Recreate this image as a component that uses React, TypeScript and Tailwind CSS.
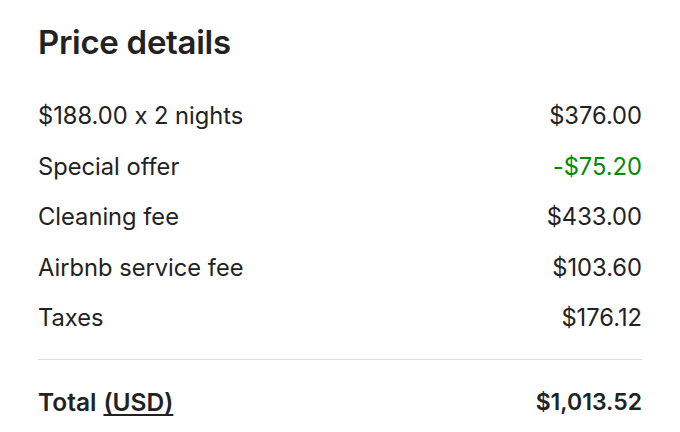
import React from 'react'

const rows = [
  { label: '$188.00 x 2 nights', value: '$376.00' },
  { label: 'Special offer', value: '-$75.20', green: true },
  { label: 'Cleaning fee', value: '$433.00' },
  { label: 'Airbnb service fee', value: '$103.60' },
  { label: 'Taxes', value: '$176.12' },
]

export default function App() {
  return (
    <div
      className="w-[680px] h-[432px] bg-white px-[38px] pt-[22px] text-[#222222] [font-feature-settings:'calt'_0]"
      style={{ fontFamily: 'Inter, "Noto Sans", sans-serif' }}
    >
      {/* Heading */}
      <h1 className="text-[33px] leading-[40px] font-semibold tracking-[-0.3px]">Price details</h1>

      {/* Line items */}
      <div className="mt-[29px] flex flex-col">
        {rows.map((r) => (
          <div key={r.label} className="h-[50.5px] flex items-center justify-between text-[23.7px]">
            <span>{r.label}</span>
            <span className={r.green ? 'text-[#008a05]' : ''}>{r.value}</span>
          </div>
        ))}
      </div>

      <div className="mt-[15px] border-t border-[#dddddd]" />

      {/* Total */}
      <div className="mt-[18px] h-[50px] flex items-center justify-between font-semibold">
        <span className="text-[24.5px]">
          Total<span className="ml-[7px] underline underline-offset-[3px]">(USD)</span>
        </span>
        <span className="text-[23px]">$1,013.52</span>
      </div>
    </div>
  )
}
